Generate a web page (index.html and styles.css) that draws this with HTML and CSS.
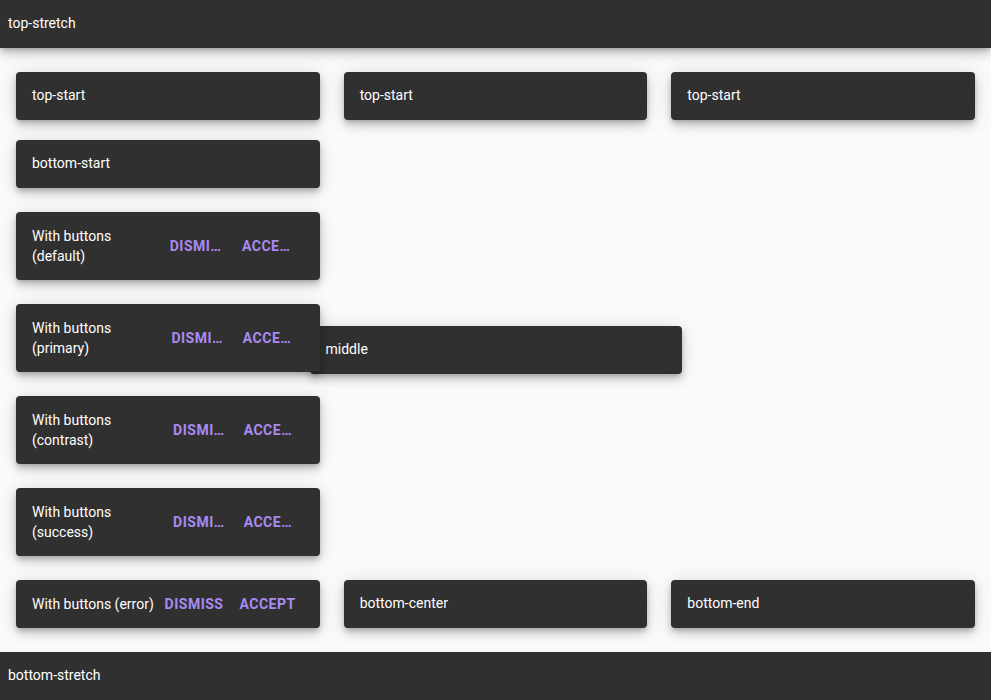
FILE: index.html
```html
<!DOCTYPE html>
<html lang="en">
<head>
<meta charset="utf-8">
<title>Snackbars</title>
<link rel="stylesheet" href="styles.css">
</head>
<body>
<div class="page">
  <div class="bar bar-top"><span class="label">top-stretch</span></div>
  <div class="middle-layer">
    <div class="snack snack-middle"><span class="label">middle</span></div>
  </div>
  <main class="grid">
    <div class="snack"><span class="label">top-start</span></div>
    <div class="snack"><span class="label">top-start</span></div>
    <div class="snack"><span class="label">top-start</span></div>

    <div class="snack col1 tight"><span class="label">bottom-start</span></div>

    <div class="snack col1 with-actions">
      <span class="label">With buttons (default)</span>
      <button class="btn">Dismiss</button>
      <button class="btn">Accept</button>
    </div>
    <div class="snack col1 with-actions">
      <span class="label">With buttons (primary)</span>
      <button class="btn">Dismiss</button>
      <button class="btn">Accept</button>
    </div>
    <div class="snack col1 with-actions">
      <span class="label">With buttons (contrast)</span>
      <button class="btn">Dismiss</button>
      <button class="btn">Accept</button>
    </div>
    <div class="snack col1 with-actions">
      <span class="label">With buttons (success)</span>
      <button class="btn">Dismiss</button>
      <button class="btn">Accept</button>
    </div>

    <div class="snack col1 with-actions single">
      <span class="label">With buttons (error)</span>
      <button class="btn">Dismiss</button>
      <button class="btn">Accept</button>
    </div>
    <div class="snack"><span class="label">bottom-center</span></div>
    <div class="snack"><span class="label">bottom-end</span></div>
  </main>
  <div class="bar bar-bottom"><span class="label">bottom-stretch</span></div>
</div>
</body>
</html>
```

FILE: styles.css
```css
html, body {
  margin: 0;
  padding: 0;
}
body {
  background: #fafafa;
  font-family: Roboto, "Noto Sans", Arial, sans-serif;
  font-size: 14px;
  line-height: 20px;
  color: #fff;
}
.page {
  display: flex;
  flex-direction: column;
  height: 700px;
  position: relative;
  overflow: hidden;
}
.bar {
  height: 48px;
  flex: 0 0 48px;
  background: #303030;
  display: flex;
  align-items: center;
  padding: 0 8px 2px;
  box-sizing: border-box;
  position: relative;
  z-index: 2;
}
.bar-top {
  box-shadow: 0 3px 5px -1px rgba(0,0,0,.2), 0 6px 10px 0 rgba(0,0,0,.14), 0 1px 18px 0 rgba(0,0,0,.12);
}
.grid {
  flex: 1;
  display: grid;
  grid-template-columns: repeat(3, 1fr);
  grid-auto-rows: min-content;
  column-gap: 24px;
  row-gap: 24px;
  padding: 24px 16px;
  align-content: start;
}
.snack {
  background: #303030;
  border-radius: 4px;
  height: 48px;
  box-sizing: border-box;
  display: flex;
  align-items: center;
  padding: 0 16px 2px;
  box-shadow: 0 3px 5px -1px rgba(0,0,0,.2), 0 6px 10px 0 rgba(0,0,0,.14), 0 1px 18px 0 rgba(0,0,0,.12);
  position: relative;
  z-index: 1;
  min-width: 0;
}
.col1 {
  grid-column: 1;
}
.tight {
  margin-top: -4px;
}
.with-actions {
  height: 68px;
  padding: 0 16px 0 16px;
}
.with-actions.single {
  height: 48px;
}
.label {
  flex: 1 1 auto;
  min-width: 0;
}
.btn {
  flex: 0 1 auto;
  min-width: 0;
  background: none;
  border: 0;
  padding: 0 8px;
  margin: 0;
  font-family: Roboto, "Noto Sans", Arial, sans-serif;
  font-size: 14px;
  font-weight: 700;
  letter-spacing: 0.5px;
  text-transform: uppercase;
  color: #a98af2;
  white-space: nowrap;
  overflow: hidden;
  text-overflow: ellipsis;
  line-height: 36px;
}
.middle-layer {
  position: absolute;
  inset: 0;
  display: flex;
  align-items: center;
  justify-content: center;
  pointer-events: none;
  z-index: 0;
}
.snack-middle {
  width: 372px;
  z-index: 0;
}
```
